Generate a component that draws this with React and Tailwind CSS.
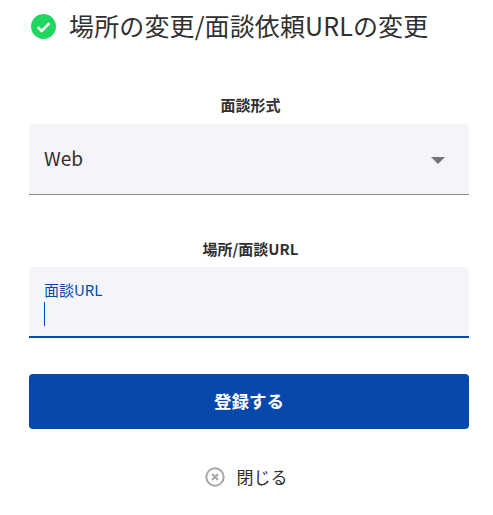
const font = { fontFamily: '"Noto Sans CJK JP", "Noto Sans", sans-serif' };

export default function App() {
  return (
    <div style={font} className="min-h-[515px] bg-white pl-[29px] pr-[24px] text-[#303030]">
      {/* Title */}
      <div className="flex h-[52px] items-center">
        <svg viewBox="0 0 24 24" className="ml-[2px] h-[25px] w-[25px]">
          <circle cx="12" cy="12" r="12" fill="#1fd65f" />
          <path d="M6.5 12.5l3.8 3.8 7.4-7.6" fill="none" stroke="#fff" strokeWidth="2.4" />
        </svg>
        <h1 className="-mt-[2px] ml-[13px] whitespace-nowrap text-[25px] font-normal leading-[30px] tracking-[0.13px]">場所の変更/面談依頼URLの変更</h1>
      </div>

      {/* Meeting type */}
      <p className="mt-[43px] pl-[3px] text-center text-[15px] font-bold leading-[20px]">面談形式</p>
      <div className="mt-[9px] flex h-[71px] items-center justify-between rounded-t-[4px] border-b border-[#8c8c8c] bg-[#f4f5f9] pl-[15px] pr-[24px]">
        <span className="-mt-[2px] text-[19px] leading-[24px]">Web</span>
        <div className="mt-[3px] h-0 w-0 border-x-[7px] border-t-[7px] border-x-transparent border-t-[#757575]" />
      </div>

      {/* Location */}
      <p className="mt-[44px] pl-[3px] text-center text-[15px] font-bold leading-[20px]">場所/面談URL</p>
      <div className="mt-[8px] h-[71px] rounded-t-[4px] border-b-2 border-[#0749ab] bg-[#f4f5f9] pl-[15px] pt-[14px]">
        <p className="text-[15px] leading-[18px] text-[#0749ab]">面談URL</p>
        <div className="mt-[3px] h-[24px] w-px bg-[#0749ab]" />
      </div>

      {/* Actions */}
      <button className="mt-[36px] flex h-[55px] w-full items-center justify-center rounded-[4px] bg-[#0749ab] text-[17.5px] font-bold text-white">
        登録する
      </button>
      <button className="mx-auto mt-[36px] flex items-center pr-[6px]">
        <svg viewBox="0 0 20 20" className="h-[20px] w-[20px]" fill="none" stroke="#a6a6a6">
          <circle cx="10" cy="10" r="8.7" strokeWidth="2" />
          <path d="M7 7l6 6M13 7l-6 6" strokeWidth="2" />
        </svg>
        <span className="ml-[12px] text-[17px] leading-[24px]">閉じる</span>
      </button>
    </div>
  );
}
